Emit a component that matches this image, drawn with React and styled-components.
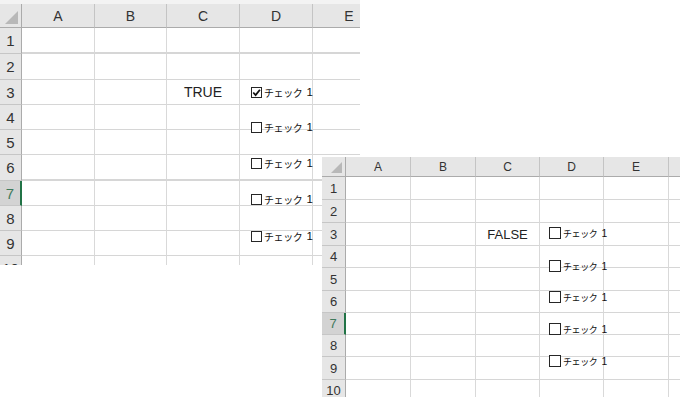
import React from "react"
import styled, { createGlobalStyle } from "styled-components"

const GlobalStyle = createGlobalStyle`
  html, body { margin: 0; padding: 0; background: #fff; }
  body { font-family: "Liberation Sans", "Noto Sans CJK JP", sans-serif; }
`

const Desktop = styled.div`
  position: relative;
  width: 680px;
  height: 397px;
  overflow: hidden;
  background: #fff;
`

// each screenshot sits on the page like a window
const Window = styled.div`
  position: absolute;
  left: ${p => p.$x}px;
  top: ${p => p.$y}px;
  width: ${p => p.$w}px;
  height: ${p => p.$h}px;
  padding-top: ${p => p.$pad || 0}px;
  box-sizing: border-box;
  overflow: hidden;
  background: ${p => p.$pad ? "#f3f3f3" : "#fff"};
`

const Grid = styled.div`
  position: relative;
  display: grid;
  grid-template-columns: ${p => p.$cols.map(c => c + "px").join(" ")};
  grid-template-rows: ${p => [p.$head, ...p.$rows].map(r => r + "px").join(" ")};
  background: #fff;
  width: max-content;
`

const Corner = styled.div`
  position: relative;
  box-sizing: border-box;
  background: #e6e6e6;
  border-right: 1px solid #ababab;
  border-bottom: 1px solid #ababab;
  &::after {
    content: "";
    position: absolute;
    right: 3px;
    bottom: 3px;
    width: 0;
    height: 0;
    border-left: ${p => p.$tri}px solid transparent;
    border-bottom: ${p => p.$tri}px solid #b8b8b8;
  }
`

const ColHead = styled.div`
  box-sizing: border-box;
  background: #e6e6e6;
  border-right: 1px solid #c4c4c4;
  border-bottom: 1px solid #ababab;
  display: flex;
  align-items: center;
  justify-content: center;
  font-size: ${p => p.$fs}px;
  color: #333;
`

const RowHead = styled.div`
  box-sizing: border-box;
  background: ${p => p.$sel ? "#d3d3d3" : "#e6e6e6"};
  border-right: ${p => p.$sel ? "2px solid #217346" : "1px solid #ababab"};
  border-bottom: 1px solid #c6c6c6;
  display: flex;
  align-items: center;
  justify-content: center;
  font-size: ${p => p.$fs}px;
  color: ${p => p.$sel ? "#3f7a5c" : "#333"};
`

const Cell = styled.div`
  box-sizing: border-box;
  border-right: 1px solid #d9d9d9;
  border-bottom: ${p => p.$thick ? 2 : 1}px solid #d6d6d6;
  display: flex;
  align-items: center;
  justify-content: center;
  font-size: ${p => p.$fs}px;
  color: #222;
`

const Control = styled.div`
  position: absolute;
  left: ${p => p.$x}px;
  top: ${p => p.$y}px;
  height: 14px;
  display: flex;
  align-items: center;
  gap: 2px;
  white-space: nowrap;
`

const Box = styled.div`
  box-sizing: border-box;
  width: ${p => p.$size}px;
  height: ${p => p.$size}px;
  border: 1.5px solid #262626;
  background: #fff;
  display: flex;
  align-items: center;
  justify-content: center;
`

const Label = styled.span`
  display: flex;
  align-items: center;
  font-family: "Noto Sans CJK JP", sans-serif;
  font-size: ${p => p.$fs}px;
  letter-spacing: -0.4px;
  color: #111;
`

const Num = styled.span`
  font-family: "Liberation Sans", sans-serif;
  font-size: 1.15em;
  letter-spacing: 0;
  margin-left: 4px;
`

const CheckMark = () => (
  <svg width="9" height="9" viewBox="0 0 10 10">
    <path d="M1.4 5 L4 7.8 L8.8 2" fill="none" stroke="#111" strokeWidth="2" />
  </svg>
)

const LETTERS = ["A", "B", "C", "D", "E", "F"]

function Sheet({ cols, head, rows, headFs, rowFs, cellFs, tri, selected, thick = [], values = {}, controls, ctrl }) {
  const nCols = cols.length - 1
  return (
    <Grid $cols={cols} $head={head} $rows={rows}>
      <Corner $tri={tri} />
      {LETTERS.slice(0, nCols).map(l => (
        <ColHead key={l} $fs={headFs}>{l}</ColHead>
      ))}
      {rows.map((_, i) => {
        const r = i + 1
        return (
          <React.Fragment key={r}>
            <RowHead $fs={rowFs} $sel={r === selected}>{r}</RowHead>
            {LETTERS.slice(0, nCols).map(l => (
              <Cell key={l} $fs={cellFs} $thick={thick.includes(r)}>
                {values[l + r]}
              </Cell>
            ))}
          </React.Fragment>
        )
      })}
      {controls.map((c, i) => (
        <Control key={i} $x={ctrl.x} $y={c.y}>
          <Box $size={ctrl.box}>{c.on && <CheckMark />}</Box>
          <Label $fs={ctrl.fs}>チェック<Num>1</Num></Label>
        </Control>
      ))}
    </Grid>
  )
}

export default function App() {
  return (
    <Desktop>
      <GlobalStyle />
      <Window $x={0} $y={0} $w={360} $h={265} $pad={4}>
        <Sheet
          cols={[22, 73, 72, 73, 73, 73]}
          head={24}
          rows={[26, 26, 25, 25, 25, 26, 25, 25, 25, 25]}
          headFs={14}
          rowFs={15}
          cellFs={14}
          tri={13}
          selected={7}
          thick={[1, 6]}
          values={{ C3: "TRUE" }}
          ctrl={{ x: 251, box: 11, fs: 10 }}
          controls={[
            { y: 81, on: true },
            { y: 116 },
            { y: 152 },
            { y: 188 },
            { y: 225 },
          ]}
        />
      </Window>
      <Window $x={322} $y={157} $w={358} $h={240}>
        <Sheet
          cols={[24, 65, 65, 64, 64, 65, 65]}
          head={20}
          rows={[23, 23, 23, 22, 23, 22, 22, 22, 23, 22]}
          headFs={12}
          rowFs={13}
          cellFs={13}
          tri={11}
          selected={7}
          values={{ C3: "FALSE" }}
          ctrl={{ x: 227, box: 12, fs: 9 }}
          controls={[
            { y: 69 },
            { y: 102 },
            { y: 133 },
            { y: 165 },
            { y: 197 },
          ]}
        />
      </Window>
    </Desktop>
  )
}
